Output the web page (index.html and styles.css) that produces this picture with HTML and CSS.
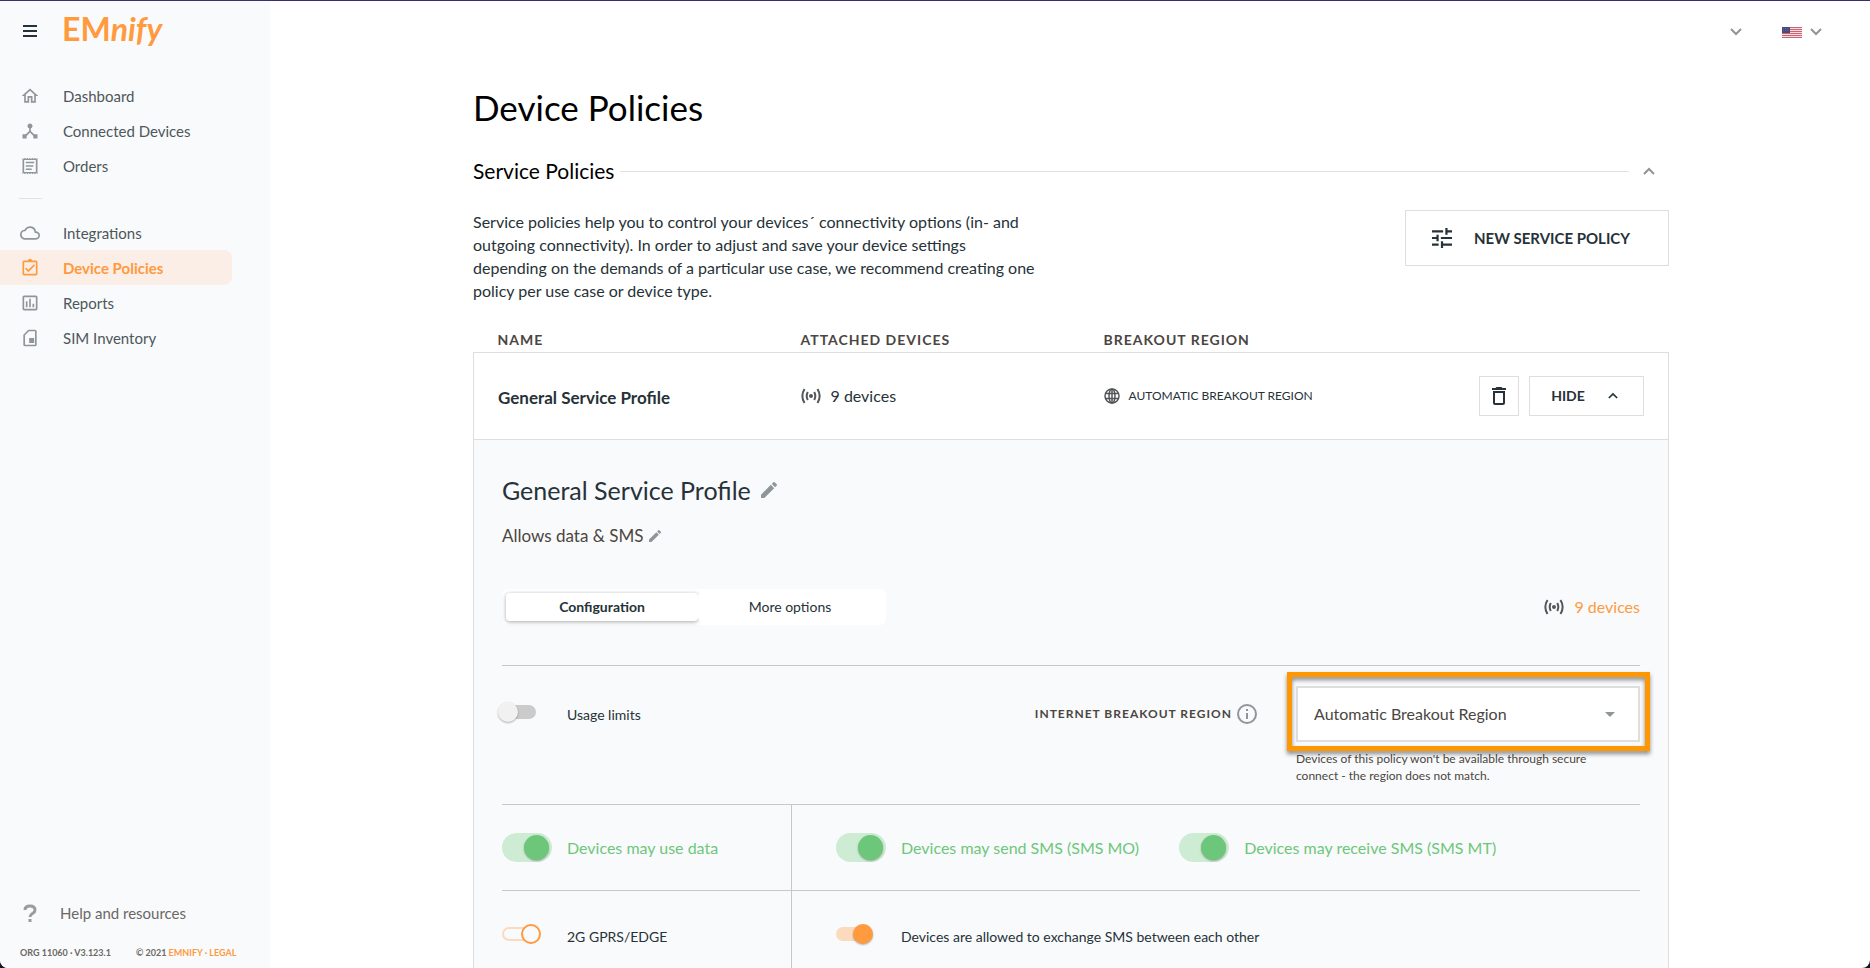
FILE: index.html
```html
<!DOCTYPE html>
<html lang="en">
<head>
<meta charset="utf-8">
<meta name="viewport" content="width=device-width, initial-scale=1">
<title>Device Policies</title>
<link rel="stylesheet" href="styles.css">
</head>
<body>
<svg class="defs" aria-hidden="true">
  <symbol id="signal" viewBox="0 0 20 16">
    <circle cx="10" cy="8" r="2"/>
    <path fill="none" stroke="currentColor" stroke-width="2" d="M3.500 1Q-.800 8 3.500 15M16.500 1Q20.800 8 16.500 15M6.800 4Q4.600 8 6.800 12M13.200 4Q15.400 8 13.200 12"/>
  </symbol>
  <symbol id="pencil" viewBox="3 3 18 18">
    <path d="M3 17.250V21h3.750L17.810 9.940l-3.750-3.750L3 17.250zM20.710 7.040a1 1 0 0 0 0-1.410l-2.340-2.340a1 1 0 0 0-1.410 0l-1.830 1.830 3.750 3.750 1.830-1.830z"/>
  </symbol>
  <symbol id="down" viewBox="0 0 12 8">
    <path fill="none" stroke="currentColor" stroke-width="2" d="M1 1l5 5 5-5"/>
  </symbol>
  <symbol id="up" viewBox="0 0 12 8">
    <path fill="none" stroke="currentColor" stroke-width="2" d="M1 7l5-5 5 5"/>
  </symbol>
</svg>
<div class="app">
  <aside class="sidebar">
    <div class="brand">
      <button class="icon-button menu" aria-label="Menu">
        <svg width="14" height="12" viewBox="0 0 14 12"><path d="M0 0h14v2H0zM0 5h14v2H0zM0 10h14v2H0z"/></svg>
      </button>
      <a class="logo" href="#">EM<i>nify</i></a>
    </div>
    <nav class="nav">
      <a href="#"><svg width="20" height="20" viewBox="0 0 24 24"><path d="M12 5.690l5 4.500V18h-2v-6H9v6H7v-7.810l5-4.500M12 3L2 12h3v8h6v-6h2v6h6v-8h3L12 3z"/></svg>Dashboard</a>
      <a href="#"><svg width="20" height="20" viewBox="0 0 24 24"><path d="M17 16l-4-4V8.820C14.160 8.400 15 7.300 15 6c0-1.660-1.340-3-3-3S9 4.340 9 6c0 1.300.840 2.400 2 2.820V12l-4 4H3v5h5v-3.050l4-4.200 4 4.200V21h5v-5h-4z"/></svg>Connected Devices</a>
      <a href="#"><svg width="20" height="20" viewBox="0 0 24 24"><path d="M19.500 3.500L18 2l-1.500 1.500L15 2l-1.500 1.500L12 2l-1.500 1.500L9 2 7.500 3.500 6 2 4.500 3.500 3 2v20l1.500-1.500L6 22l1.500-1.500L9 22l1.500-1.500L12 22l1.500-1.500L15 22l1.500-1.500L18 22l1.500-1.500L21 22V2l-1.500 1.500zM19 19.090H5V4.910h14v14.180zM7 15h7v1.800H7zM7 11h9v1.800H7zM7 7h10v1.800H7z"/></svg>Orders</a>
      <hr>
      <a href="#"><svg width="20" height="20" viewBox="0 0 24 24"><path d="M19.350 10.040A7.490 7.490 0 0 0 12 4C9.110 4 6.600 5.640 5.350 8.040A5.990 5.990 0 0 0 0 14c0 3.310 2.690 6 6 6h13c2.760 0 5-2.240 5-5 0-2.640-2.050-4.780-4.650-4.960zM19 18H6a4 4 0 0 1-.440-7.970l1.070-.110.500-.950A5.480 5.480 0 0 1 12 6c2.620 0 4.880 1.860 5.390 4.430l.300 1.500 1.530.110A2.980 2.980 0 0 1 19 18z"/></svg>Integrations</a>
      <a href="#" class="active" aria-current="page"><svg width="20" height="20" viewBox="0 0 24 24"><path d="M18 9l-1.400-1.400-6.600 6.600-2.600-2.600L6 13l4 4zM19 3h-4.180a3 3 0 0 0-5.640 0H5a2 2 0 0 0-2 2v14a2 2 0 0 0 2 2h14a2 2 0 0 0 2-2V5a2 2 0 0 0-2-2zM19 19H5V5h14z"/></svg>Device Policies</a>
      <a href="#"><svg width="20" height="20" viewBox="0 0 24 24"><path d="M19 3H5c-1.100 0-2 .900-2 2v14c0 1.100.900 2 2 2h14c1.100 0 2-.900 2-2V5c0-1.100-.900-2-2-2zm0 16H5V5h14v14zM7 10h2v7H7zM11 7h2v10h-2zM15 13h2v4h-2z"/></svg>Reports</a>
      <a href="#"><svg width="20" height="20" viewBox="0 0 24 24"><path d="M18 2h-8L4 8v12a2 2 0 0 0 2 2h12a2 2 0 0 0 2-2V4a2 2 0 0 0-2-2zm0 18H6V8.830L10.830 4H18v16zM11 12h6v6h-6z"/></svg>SIM Inventory</a>
    </nav>
    <div class="bottom">
      <a class="help" href="#"><svg width="14" height="18" viewBox="0 0 14 18"><path fill="none" stroke="currentColor" stroke-width="3" d="M2 6Q2 2 7 2t5 4Q12 8 9.500 9.500T7 13"/><path d="M5.500 15h3v3h-3z"/></svg>Help and resources</a>
      <p class="legal"><span>ORG 11060 · V3.123.1</span><span>© 2021 <a href="#">EMNIFY</a> <a href="#">· LEGAL</a></span></p>
    </div>
  </aside>

  <main class="main">
    <header class="topbar">
      <button class="icon-button" aria-label="Account"><svg width="12" height="8"><use href="#down"/></svg></button>
      <button class="icon-button lang" aria-label="Language">
        <svg width="20" height="11" viewBox="0 0 20 11"><path fill="#f3dfe1" d="M0 0h20v11H0z"/><path fill="#cf6270" d="M0 0h20v1H0zM0 2h20v1H0zM0 4h20v1H0zM0 6h20v1H0zM0 8h20v1H0zM0 10h20v1H0z"/><path fill="#494a7c" d="M0 0h8v6H0z"/><path stroke="#62639a" stroke-dasharray="1 1" d="M1 1.500h6M1 3.500h6"/></svg>
        <svg width="12" height="8"><use href="#down"/></svg>
      </button>
    </header>

    <div class="content">
      <h1>Device Policies</h1>
      <div class="section-head">
        <h2>Service Policies</h2>
        <span class="rule"></span>
        <button class="icon-button" aria-label="Collapse section"><svg width="12" height="8"><use href="#up"/></svg></button>
      </div>
      <div class="intro">
        <p>Service policies help you to control your devices´ connectivity options (in- and outgoing connectivity). In order to adjust and save your device settings depending on the demands of a particular use case, we recommend creating one policy per use case or device type.</p>
        <button class="box-button new-policy">
          <svg width="20" height="20" viewBox="3 3 18 18"><path d="M3 17v2h6v-2H3zM3 5v2h10V5H3zm10 16v-2h8v-2h-8v-2h-2v6h2zM7 9v2H3v2h4v2h2V9H7zm14 4v-2H11v2h10zm-6-4h2V7h4V5h-4V3h-2v6z"/></svg>
          NEW SERVICE POLICY
        </button>
      </div>

      <table class="policies">
        <thead>
          <tr><th>NAME</th><th>ATTACHED DEVICES</th><th>BREAKOUT REGION</th><th></th></tr>
        </thead>
        <tbody>
          <tr>
            <td class="name">General Service Profile</td>
            <td><span class="devices"><svg width="20" height="16"><use href="#signal"/></svg>9 devices</span></td>
            <td><span class="region"><svg width="16" height="16" viewBox="0 0 16 16"><g fill="none" stroke="currentColor" stroke-width="1.500"><circle cx="8" cy="8" r="7"/><ellipse cx="8" cy="8" rx="3" ry="7"/><path d="M1.500 5.500h13M1.500 10.500h13M8 1v14"/></g></svg>AUTOMATIC BREAKOUT REGION</span></td>
            <td><span class="actions">
              <button class="box-button trash" aria-label="Delete policy"><svg width="14" height="18" viewBox="5 3 14 18"><path d="M6 19a2 2 0 0 0 2 2h8a2 2 0 0 0 2-2V7H6v12zM8 9h8v10H8V9zm7.500-5l-1-1h-5l-1 1H5v2h14V4z"/></svg></button>
              <button class="box-button hide">HIDE <svg width="10" height="7"><use href="#up"/></svg></button>
            </span></td>
          </tr>
        </tbody>
      </table>

      <section class="panel">
        <h3>General Service Profile <button class="icon-button" aria-label="Edit name"><svg width="16" height="16"><use href="#pencil"/></svg></button></h3>
        <p class="desc">Allows data &amp; SMS <button class="icon-button" aria-label="Edit description"><svg width="12" height="12"><use href="#pencil"/></svg></button></p>
        <div class="tab-row">
          <div class="tabs" role="tablist">
            <button role="tab" aria-selected="true">Configuration</button>
            <button role="tab" aria-selected="false">More options</button>
          </div>
          <a class="devices linked" href="#"><svg width="20" height="16"><use href="#signal"/></svg>9 devices</a>
        </div>

        <div class="limits">
          <label class="switch-field"><span class="slot"><input class="switch off" type="checkbox"></span>Usage limits</label>
          <div class="breakout">
            <label class="breakout-label" for="region">INTERNET BREAKOUT REGION
              <svg width="20" height="20" viewBox="0 0 20 20"><circle cx="10" cy="10" r="9" fill="none" stroke="currentColor" stroke-width="2"/><path d="M9 5h2v2H9zM9 9h2v6H9z"/></svg>
            </label>
            <div class="breakout-control">
              <div class="select-wrap">
                <select id="region"><option>Automatic Breakout Region</option></select>
                <svg class="caret" width="10" height="5" viewBox="0 0 10 5"><path d="M0 0h10L5 5z"/></svg>
              </div>
              <p>Devices of this policy won't be available through secure connect - the region does not match.</p>
            </div>
          </div>
        </div>

        <div class="grid">
          <div class="cell left top">
            <label class="switch-field green"><span class="slot"><input class="switch big" type="checkbox" checked></span>Devices may use data</label>
          </div>
          <div class="cell top">
            <label class="switch-field green"><span class="slot"><input class="switch big" type="checkbox" checked></span>Devices may send SMS (SMS MO)</label>
            <label class="switch-field green"><span class="slot"><input class="switch big" type="checkbox" checked></span>Devices may receive SMS (SMS MT)</label>
          </div>
          <div class="cell left">
            <label class="switch-field"><span class="slot"><input class="switch outlined" type="checkbox" checked></span>2G GPRS/EDGE</label>
          </div>
          <div class="cell">
            <label class="switch-field"><span class="slot"><input class="switch orange" type="checkbox" checked></span>Devices are allowed to exchange SMS between each other</label>
          </div>
        </div>
      </section>
    </div>
  </main>
</div>
</body>
</html>
```

FILE: styles.css
```css
*, *::before, *::after { box-sizing: border-box; }

body {
  margin: 0;
  background: #15152a;
  color: #263238;
  font-family: Lato, "Open Sans", sans-serif;
  font-size: 16px;
}

h1, h2, h3, p { margin: 0; font-weight: 400; }
a { color: inherit; text-decoration: none; }
svg { fill: currentColor; flex: none; display: block; }
.defs { position: absolute; width: 0; height: 0; }
button, select { font: inherit; color: inherit; }

.app {
  display: flex;
  height: 100vh;
  overflow: hidden;
  border-top: 1px solid #3b2e70;
  border-radius: 0 0 8px 8px;
  background: #fff;
}

.icon-button {
  display: inline-flex;
  align-items: center;
  padding: 0;
  border: 0;
  background: none;
  color: #8f9699;
}

/* Sidebar */
.sidebar {
  flex: none;
  display: flex;
  flex-direction: column;
  width: 270px;
  background: #f9fafc;
}
.brand {
  display: flex;
  align-items: center;
  gap: 25px;
  height: 60px;
  padding-left: 23px;
}
.menu { color: #263238; }
.logo {
  color: #ff9a3e;
  font-size: 32px;
  font-weight: 700;
  line-height: 56px;
  padding-bottom: 4px;
}
.nav { padding-top: 17px; font-size: 15px; color: #4d575b; }
.nav a {
  display: flex;
  align-items: center;
  gap: 23px;
  height: 35px;
  width: 232px;
  padding-left: 20px;
  border-radius: 0 8px 8px 0;
}
.nav svg { color: #8f9699; }
.nav hr {
  width: 23px;
  height: 1px;
  margin: 15px 0 16px 19px;
  border: 0;
  background: #dfe1e3;
}
.nav .active { background: #faeee6; color: #ff9a3e; font-weight: 700; }
.nav .active svg { color: #ff9a3e; }
.bottom { margin-top: auto; padding-bottom: 9px; color: #6b6865; }
.help { display: flex; align-items: center; gap: 23px; padding-left: 23px; font-size: 15px; }
.help svg { color: #9a9c9e; }
.legal {
  display: flex;
  gap: 25px;
  margin-top: 25px;
  padding-left: 20px;
  font-size: 9px;
  font-weight: 700;
  line-height: 12px;
  white-space: nowrap;
}
.legal a { color: #ff9a3e; }

/* Page */
.main { flex: 1; min-width: 0; overflow: hidden; }
.topbar {
  display: flex;
  justify-content: flex-end;
  align-items: center;
  gap: 40px;
  height: 62px;
  padding-right: 48px;
}
.lang { gap: 8px; }
.content { width: min(1198px, 100% - 64px); margin: 0 auto; padding-left: 2px; }
h1 { padding-top: 22px; color: #000; font-size: 35px; line-height: 44px; }
.section-head {
  display: flex;
  align-items: center;
  gap: 6px;
  margin-top: 30px;
  padding-right: 14px;
  color: #000;
}
h2 { font-size: 21px; line-height: 24px; }
.rule { flex: 1; height: 1px; margin-right: 8px; background: #e2e2e2; }
.intro {
  display: flex;
  justify-content: space-between;
  align-items: flex-start;
  margin-top: 27px;
}
.intro p { max-width: 568px; line-height: 23px; }
.box-button {
  display: inline-flex;
  align-items: center;
  justify-content: center;
  padding: 0;
  border: 1px solid #dedede;
  background: #fff;
  font-weight: 700;
  font-size: 15px;
}
.new-policy { gap: 22px; width: 264px; height: 56px; padding-right: 12px; }

/* Policy table */
.policies {
  width: 100%;
  margin-top: 25px;
  border-collapse: collapse;
  table-layout: fixed;
  text-align: left;
}
.policies th {
  height: 25px;
  padding: 0;
  color: #4b4641;
  font-size: 14px;
  letter-spacing: 1px;
}
.policies tbody tr { height: 87px; border: 1px solid #dedede; }
.policies td { padding: 0; }
.policies th:first-child, .policies td:first-child { padding-left: 24px; width: 327px; }
.policies th:nth-child(2), .policies th:nth-child(3) { width: 303px; }
.policies .name { padding-top: 4px; font-size: 17px; font-weight: 700; }
.devices { display: flex; align-items: center; gap: 10px; }
.devices svg, .region svg { color: #54565a; }
.region { display: flex; align-items: center; gap: 9px; font-size: 12px; white-space: nowrap; }
.actions { display: flex; justify-content: flex-end; gap: 10px; padding-right: 24px; }
.trash { width: 40px; height: 40px; }
.hide { gap: 23px; width: 115px; height: 40px; padding-right: 4px; font-size: 14px; }

/* Expanded policy */
.panel {
  padding: 34px 28px 60px;
  border: 1px solid #dedede;
  border-top: 0;
  background: #f9fafc;
}
h3 { display: flex; align-items: center; gap: 10px; font-size: 25px; line-height: 32px; }
.desc { display: flex; align-items: center; gap: 6px; margin-top: 18px; color: #4b4641; font-size: 17px; line-height: 24px; }
.tab-row { display: flex; justify-content: space-between; align-items: center; margin-top: 41px; }
.tabs {
  display: flex;
  width: 384px;
  padding: 4px;
  border-radius: 6px;
  background: #fff;
}
.tabs button {
  flex: 1;
  height: 28px;
  padding: 0;
  border: 0;
  border-radius: 4px;
  background: #fff;
  font-size: 14px;
}
.tabs [aria-selected="true"] { flex: 0 0 192px; font-weight: 700; box-shadow: 0 1px 4px rgba(0, 0, 0, .35); }
.linked { color: #ff9a3e; }

.limits {
  display: flex;
  justify-content: space-between;
  height: 139px;
  margin-top: 40px;
  padding-top: 20px;
  border-top: 1px solid #c6c8ca;
}
.limits .switch-field { height: 56px; }
.switch-field { display: flex; align-items: center; padding-top: 2px; font-size: 14px; }
.slot { display: flex; width: 65px; padding-bottom: 6px; }
.switch-field.green { padding-top: 0; color: #6dc77a; font-size: 16px; }
.green .slot { padding-bottom: 0; }
.breakout { display: flex; gap: 39px; }
.breakout-label {
  display: flex;
  align-items: center;
  gap: 5px;
  height: 56px;
  color: #4b4641;
  font-size: 12px;
  font-weight: 700;
  letter-spacing: 1px;
}
.breakout-label svg { color: #8f9699; }
.breakout-control { width: 344px; }
.breakout-control p { max-width: 305px; margin-top: 8px; color: #4b4641; font-size: 12px; line-height: 17px; }
.select-wrap { position: relative; }
.select-wrap::after {
  content: "";
  position: absolute;
  inset: -14px -10px -9px -9px;
  border: 5px solid #ff9800;
  filter: drop-shadow(0 3px 2px rgba(0, 0, 0, .45));
  pointer-events: none;
}
.select-wrap select {
  display: block;
  width: 100%;
  height: 56px;
  padding: 0 40px 0 16px;
  border: 2px solid #dedede;
  border-radius: 0;
  background: #fff;
  color: #4b4641;
  font-size: 16px;
  appearance: none;
}
.caret { position: absolute; right: 25px; top: 26px; color: #8f9699; }

.grid {
  display: grid;
  grid-template-columns: 290px 1fr;
  border-top: 1px solid #c6c8ca;
}
.cell { display: flex; align-items: center; gap: 40px; height: 90px; padding-left: 44px; }
.cell.left { padding-left: 0; border-right: 1px solid #c6c8ca; }
.cell.top { height: 86px; border-bottom: 1px solid #c6c8ca; }

/* Switches */
.switch {
  position: relative;
  width: 34px;
  height: 14px;
  margin: 0;
  border-radius: 15px;
  appearance: none;
}
.switch::before {
  content: "";
  position: absolute;
  top: -3px;
  width: 20px;
  height: 20px;
  border-radius: 50%;
  box-shadow: 0 1px 2px rgba(0, 0, 0, .3);
}
.switch.off { background: #cbcbcb; }
.switch.off::before { left: -4px; background: #f1f1f1; }
.switch.big { width: 50px; height: 29px; background: #ceebd4; }
.switch.big::before { top: 2px; right: 3px; width: 25px; height: 25px; background: #6dc77a; }
.switch.orange { background: #fcdabd; }
.switch.orange::before { right: -3px; background: #ff9a3e; }
.switch.outlined { border: 2px solid #fcdabd; }
.switch.outlined::before {
  top: -5px;
  right: -7px;
  border: 2px solid #ff9a3e;
  background: #f9fafc;
  box-shadow: none;
}
```
